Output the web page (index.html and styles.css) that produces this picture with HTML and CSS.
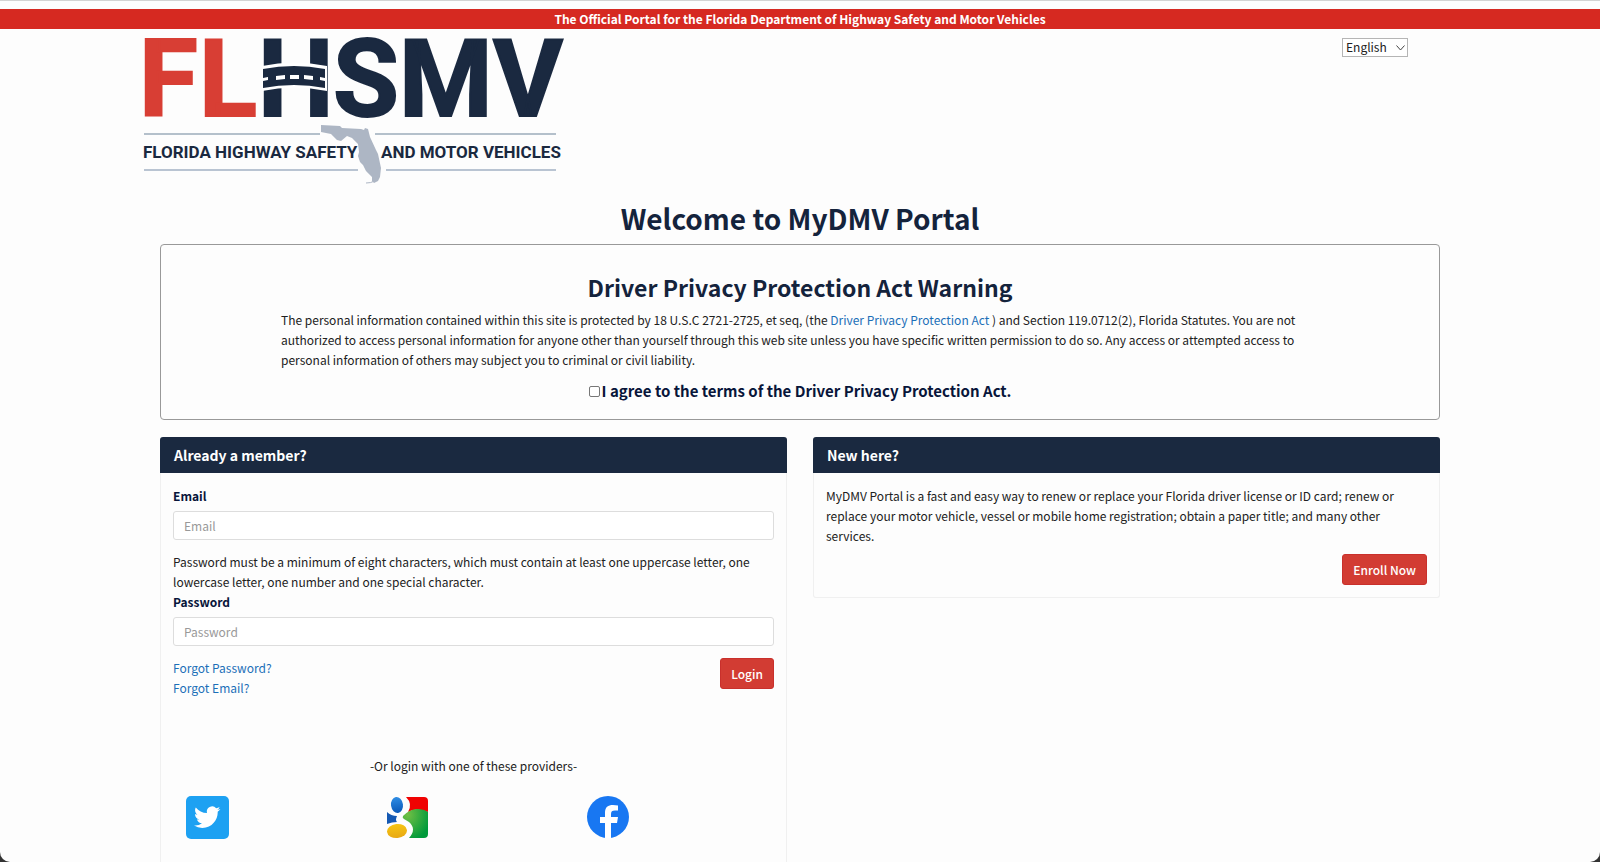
FILE: index.html
```html
<!DOCTYPE html>
<html lang="en">
<head>
    <meta charset="UTF-8">
    <meta name="viewport" content="width=device-width, initial-scale=1.0">
    <title>MyDMV Portal</title>
    <link rel="stylesheet" href="styles.css">
</head>
<body>
    <div class="banner">The Official Portal for the Florida Department of Highway Safety and Motor Vehicles</div>

    <header class="site-header">
        <svg class="logo" width="420" height="150" viewBox="0 0 420 150" role="img" aria-label="FLHSMV">
            <g class="logo-letters">
                <text class="logo-red" x="-5" y="79">F</text>
                <text class="logo-red" x="55" y="79">L</text>
                <text x="114" y="79">H</text>
                <text x="189" y="79">S</text>
                <text x="255" y="79">M</text>
                <text x="349" y="79">V</text>
            </g>
            <!-- bridge across the H -->
            <path d="M118 29Q150 22 183 29V54Q150 47 118 54Z" fill="#fff"/>
            <path d="M119 32Q150 26 181 32V51Q150 45 119 51Z" fill="#1a2940"/>
            <path d="M119 41l5-1v3l-5 1zM132 39l9-1v4l-9 1zM146 38h9v4h-9zM160 38l9 1v4l-9-1zM176 40l5 1v3l-5-1z" fill="#fff"/>
            <path d="M0 97h176M231 97h181" stroke="#b4c0cb" stroke-width="2"/>
            <path d="M0 133h214M242 133h170" stroke="#b9c4d2" stroke-width="2"/>
            <path d="M177 88l19 1 2 2 19 1 3 1 1-2 3 1 2 8 6 13 2 4 3 14-1 9-2 4-4 2-2-2v-4l-6-6-3-6-3-3-2-6 1-4-1-8-6-6-5-2-6 5-4-1-6-6-10-2z" fill="#adb6c4"/>
            <path d="M222 146q10 0 12-7" fill="none" stroke="#adb6c4"/>
            <text class="logo-tagline" x="-1" y="121">FLORIDA HIGHWAY SAFETY</text>
            <text class="logo-tagline" x="237" y="121">AND MOTOR VEHICLES</text>
        </svg>
        <div class="language">
            <select aria-label="Language">
                <option>English</option>
                <option>Español</option>
            </select>
            <svg width="9" height="6" viewBox="0 0 9 6" aria-hidden="true"><path d="M.5 .500L4.500 5 8.500 .500" fill="none" stroke="#444"/></svg>
        </div>
    </header>

    <main>
        <h1>Welcome to MyDMV Portal</h1>

        <section class="warning">
            <h2>Driver Privacy Protection Act Warning</h2>
            <p>The personal information contained within this site is protected by 18 U.S.C 2721-2725, et seq, (the <a href="#">Driver Privacy Protection Act</a> ) and Section 119.0712(2), Florida Statutes. You are not authorized to access personal information for anyone other than yourself through this web site unless you have specific written permission to do so. Any access or attempted access to personal information of others may subject you to criminal or civil liability.</p>
            <div class="agree">
                <input type="checkbox" id="agree">
                <label for="agree">I agree to the terms of the Driver Privacy Protection Act.</label>
            </div>
        </section>

        <div class="columns">
            <section class="panel member">
                <h3>Already a member?</h3>
                <form class="panel-body">
                    <label for="email">Email</label>
                    <input type="email" id="email" placeholder="Email">
                    <p class="hint">Password must be a minimum of eight characters, which must contain at least one uppercase letter, one lowercase letter, one number and one special character.</p>
                    <label for="password">Password</label>
                    <input type="password" id="password" placeholder="Password">
                    <div class="form-actions">
                        <div class="forgot">
                            <a href="#">Forgot Password?</a>
                            <a href="#">Forgot Email?</a>
                        </div>
                        <button type="submit">Login</button>
                    </div>
                    <p class="providers-title">-Or login with one of these providers-</p>
                    <div class="providers">
                        <a href="#" aria-label="Twitter">
                            <svg width="43" height="43" viewBox="0 0 43 43">
                                <rect width="43" height="43" rx="5" fill="#1da1f2"/>
                                <path transform="translate(8 8) scale(1.1)" fill="#fff" d="M23.950 4.570a10 10 0 0 1-2.820.770 4.960 4.960 0 0 0 2.160-2.720c-.950.550-2 .950-3.130 1.180a4.920 4.920 0 0 0-8.380 4.480C7.690 8.090 4.070 6.130 1.640 3.160a4.820 4.820 0 0 0-.670 2.480c0 1.710.870 3.210 2.190 4.100a4.900 4.900 0 0 1-2.230-.620v.060a4.920 4.920 0 0 0 3.950 4.830 5 5 0 0 1-2.210.080 4.940 4.940 0 0 0 4.600 3.420A9.870 9.870 0 0 1 0 19.540a14 14 0 0 0 7.550 2.210c9.050 0 14-7.500 14-13.980 0-.210 0-.420-.020-.630a9.940 9.940 0 0 0 2.460-2.550z"/>
                            </svg>
                        </a>
                        <a href="#" aria-label="Google">
                            <svg width="43" height="43" viewBox="0 0 43 43">
                                <defs>
                                    <radialGradient id="green" cx="0.2" cy="0.2" r="0.9"><stop offset="0" stop-color="#70bf45"/><stop offset="1" stop-color="#009a3a"/></radialGradient>
                                    <linearGradient id="blue" x2="0" y2="1"><stop stop-color="#2f8de4"/><stop offset="1" stop-color="#0a58b8"/></linearGradient>
                                    <linearGradient id="yellow" x2="0" y2="1"><stop stop-color="#f6c512"/><stop offset="1" stop-color="#e8a813"/></linearGradient>
                                </defs>
                                <path d="M20 1h18q4 0 4 4v11Q30 11 22 16q5-8-2-15z" fill="#f00202"/>
                                <path d="M17 20Q24 13 31 13 38 13 42 16v22q0 4-4 4H23q8-9 0-16l-5-3q-2-1-1-3z" fill="url(#green)"/>
                                <ellipse cx="11" cy="9" rx="6" ry="8" transform="rotate(-8 11 9)" fill="url(#blue)"/>
                                <path d="M1 16q4 4 10 4-2 4 0 6-5 0-10 2z" fill="#1559b3"/>
                                <ellipse cx="11" cy="35" rx="10" ry="7" transform="rotate(-6 11 35)" fill="url(#yellow)"/>
                            </svg>
                        </a>
                        <a href="#" aria-label="Facebook">
                            <svg width="43" height="43" viewBox="0 0 43 43">
                                <circle cx="21" cy="21" r="21" fill="#1877f2"/>
                                <path d="M18 42V27h-5v-6h5v-4c0-6 3-8 8-8l5 .500v5h-3c-3 0-4 1-4 3.500v3h7l-1 6h-6v15q-3 .400-6 0z" fill="#fff"/>
                            </svg>
                        </a>
                    </div>
                </form>
            </section>

            <section class="panel">
                <h3>New here?</h3>
                <div class="panel-body">
                    <p class="intro">MyDMV Portal is a fast and easy way to renew or replace your Florida driver license or ID card; renew or replace your motor vehicle, vessel or mobile home registration; obtain a paper title; and many other services.</p>
                    <div class="enroll">
                        <button type="button">Enroll Now</button>
                    </div>
                </div>
            </section>
        </div>
    </main>
</body>
</html>
```
FILE: styles.css
```css
html {
    background: #fdfdfd;
    scrollbar-width: none;
}
body {
    margin: 0;
    border-top: 1px solid #d3d3d3;
    font-family: "Noto Sans CJK SC", "Open Sans", sans-serif;
    font-size: 12px;
    line-height: 20px;
    color: #212121;
}
/* rounded window corners */
body::after {
    content: "";
    position: fixed;
    inset: 0;
    border-radius: 0 0 10px 10px;
    box-shadow: 0 0 0 10px #333;
    clip-path: inset(50% 0 0 0);
    pointer-events: none;
}
* {
    box-sizing: border-box;
}
h1, h2, h3, p {
    margin: 0;
}
h1, h2 {
    color: #14233c;
    text-align: center;
}
a {
    color: #1c6fb8;
    text-decoration: none;
}
.banner {
    margin-top: 8px;
    background: #d62921;
    color: #fff;
    font-weight: bold;
    text-align: center;
}
.site-header {
    display: flex;
    justify-content: space-between;
    align-items: flex-start;
    padding: 8px 12% 0 9%;
}
.logo {
    display: block;
    overflow: visible;
}
.logo-letters {
    font-family: Roboto, sans-serif;
    font-size: 107px;
    font-weight: bold;
    fill: #1a2940;
    stroke: #1a2940;
    stroke-width: 2px;
}
.logo-letters .logo-red {
    fill: #d83e34;
    stroke: #d83e34;
}
.logo-tagline {
    font-family: Roboto, sans-serif;
    font-size: 17px;
    font-weight: bold;
    fill: #1a2940;
}
.language {
    position: relative;
    margin-top: 1px;
}
.language select {
    display: block;
    appearance: none;
    width: 66px;
    height: 19px;
    padding: 0 3px 1px;
    border: 1px solid #b5b5b5;
    border-radius: 0;
    background: #fff;
    color: #212121;
    font: inherit;
    line-height: 16px;
}
.language svg {
    position: absolute;
    top: 7px;
    right: 3px;
    pointer-events: none;
}
main {
    padding: 0 10%;
}
h1 {
    padding: 13px 0 8px;
    font-size: 28px;
    line-height: 36px;
}
.warning {
    padding: 26px 120px 18px;
    border: 1px solid #999;
    border-radius: 4px;
}
h2 {
    margin-bottom: 7px;
    font-size: 23px;
    line-height: 32px;
}
.agree {
    display: flex;
    justify-content: center;
    align-items: center;
    gap: 2px;
    margin-top: 11px;
    color: #08153a;
    font-size: 15px;
    font-weight: bold;
}
.agree input {
    width: 11px;
    height: 11px;
    margin: 0;
    appearance: none;
    border: 1px solid #777;
    border-radius: 2px;
    background: #fff;
}
.agree input:checked {
    background: #1c6fb8;
}
.columns {
    display: grid;
    grid-template-columns: 1fr 1fr;
    align-items: start;
    gap: 26px;
    margin-top: 17px;
}
.panel {
    border: 1px solid #f0f0f0;
    border-top: 0;
    border-radius: 3px;
}
h3 {
    margin: 0 -1px;
    padding: 8px 14px;
    border-radius: 3px 3px 0 0;
    background: #1a2940;
    color: #fff;
    font-size: 14px;
}
.panel-body {
    padding: 13px 12px 12px;
}
.panel-body label {
    display: block;
    color: #08153a;
    font-weight: bold;
}
.panel-body input {
    display: block;
    width: 100%;
    height: 29px;
    margin-top: 5px;
    padding: 0 10px;
    border: 1px solid #ddd;
    border-radius: 3px;
    background: #fff;
    font: inherit;
}
.panel-body input::placeholder {
    color: #999;
}
.hint {
    margin-top: 12px;
}
.form-actions {
    display: flex;
    justify-content: space-between;
    align-items: flex-start;
    margin-top: 12px;
}
.forgot {
    display: flex;
    flex-direction: column;
}
button {
    height: 31px;
    padding: 0 10px;
    border: 1px solid #c9302c;
    border-radius: 3px;
    background: #d23c33;
    color: #fff;
    font: inherit;
    font-weight: 500;
    cursor: pointer;
}
.providers-title {
    margin-top: 58px;
    text-align: center;
}
.providers {
    display: grid;
    grid-template-columns: repeat(3, 1fr);
    margin-top: 20px;
}
.providers a {
    margin-left: 13px;
}
.providers svg {
    display: block;
}
.member .panel-body {
    padding-bottom: 40px;
}
.enroll {
    display: flex;
    justify-content: flex-end;
    margin-top: 8px;
}
```
